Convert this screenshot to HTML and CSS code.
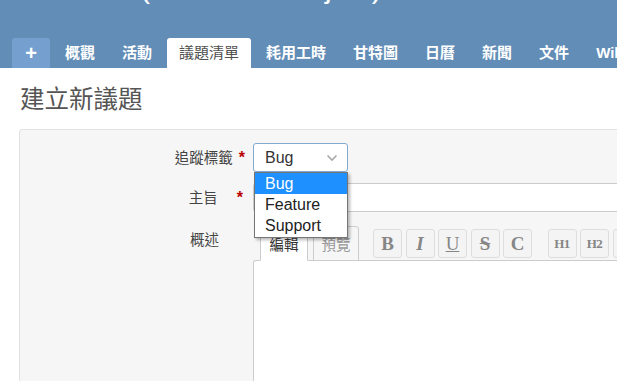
FILE: index.html
```html
<!DOCTYPE html>
<html lang="zh-Hant">
<head>
<meta charset="utf-8">
<title>建立新議題</title>
<link rel="stylesheet" href="styles.css">
</head>
<body>
<header class="header">
  <h1 class="site-title">(Redmine Project)</h1>
  <ul class="main-menu">
    <li><a class="tab-new">+</a></li>
    <li><a>概觀</a></li>
    <li><a>活動</a></li>
    <li><a class="selected">議題清單</a></li>
    <li><a>耗用工時</a></li>
    <li><a>甘特圖</a></li>
    <li><a>日曆</a></li>
    <li><a>新聞</a></li>
    <li><a>文件</a></li>
    <li><a>Wiki</a></li>
  </ul>
</header>
<main class="content">
  <h2 class="page-title">建立新議題</h2>
  <div class="box">
    <div class="row row-tracker">
      <label class="field-label">追蹤標籤<span class="required">*</span></label>
      <div class="select-wrap">
        <div class="select">
          <span>Bug</span>
          <svg class="chevron" width="12" height="8" viewBox="0 0 12 8"><polyline points="1.5,1.5 6,6 10.5,1.5" fill="none" stroke="#a8a8a8" stroke-width="1.6"/></svg>
        </div>
        <div class="dropdown">
          <div class="option active">Bug</div>
          <div class="option">Feature</div>
          <div class="option option-last">Support</div>
        </div>
      </div>
    </div>
    <div class="row row-subject">
      <label class="field-label">主旨<span class="required required-wide">*</span></label>
      <div class="text-input"></div>
    </div>
    <div class="row row-desc">
      <label class="field-label field-label-plain">概述</label>
      <div class="editor">
        <div class="editor-head">
          <div class="etab etab-selected">編輯</div>
          <div class="etab etab-preview">預覽</div>
          <div class="toolbar">
            <span class="tb tb-b">B</span>
            <span class="tb tb-i">I</span>
            <span class="tb tb-u">U</span>
            <span class="tb tb-s">S</span>
            <span class="tb tb-c">C</span>
            <span class="tb tb-h tb-group">H1</span>
            <span class="tb tb-h">H2</span>
            <span class="tb tb-h">H3</span>
          </div>
        </div>
        <div class="textarea"></div>
      </div>
    </div>
  </div>
</main>
</body>
</html>
```
FILE: styles.css
```css
* { box-sizing: border-box; }
html, body { margin: 0; padding: 0; }
body {
  width: 617px;
  height: 381px;
  overflow: hidden;
  background: #fff;
  color: #333;
  font-family: "Liberation Sans", "Noto Sans CJK TC", sans-serif;
}

.header {
  height: 68px;
  background: #628db6;
  display: flex;
  flex-direction: column;
  overflow: hidden;
}
.site-title {
  margin: -27px 0 0 140px;
  font-size: 30px;
  line-height: 30px;
  font-weight: normal;
  color: #fff;
  white-space: nowrap;
}
.main-menu {
  list-style: none;
  margin: auto 0 0 0;
  padding: 0 0 0 12px;
  display: flex;
  height: 30px;
  white-space: nowrap;
}
.main-menu li { flex: none; margin-right: 3px; }
.main-menu a {
  display: block;
  height: 30px;
  line-height: 30px;
  padding: 0 12px;
  color: #fff;
  font-weight: bold;
  font-size: 15px;
  border-radius: 3px 3px 0 0;
}
.main-menu .tab-new {
  width: 38px;
  padding: 0;
  text-align: center;
  background: #759fcf;
  font-size: 20px;
}
.main-menu .selected {
  background: #fff;
  color: #505050;
  font-weight: normal;
}

.content { padding-top: 18px; }
.page-title {
  margin: 0 0 15px 20px;
  font-size: 24.5px;
  line-height: 28px;
  font-weight: normal;
  color: #555;
}
.box {
  margin: 0 -30px 0 19px;
  height: 280px;
  border: 1px solid #e2e2e2;
  border-radius: 3px;
  background: #f6f6f6;
  padding-top: 13px;
}
.row { display: flex; align-items: center; }
.row-tracker { height: 29px; }
.row-subject { margin-top: 11px; }
.row-desc { margin-top: 14px; align-items: flex-start; }

.field-label {
  flex: none;
  width: 233px;
  text-align: right;
  padding-right: 8px;
  font-size: 14.5px;
  line-height: 20px;
  color: #444;
}
.field-label-plain { padding-right: 34px; padding-top: 4px; }
.required {
  color: #bb0000;
  font-weight: bold;
  font-size: 16px;
  margin-left: 6px;
}
.required-wide { margin-left: 19px; padding-right: 2px; }

.select-wrap { position: relative; flex: none; }
.select {
  width: 95px;
  height: 29px;
  border: 1px solid #82a9d0;
  border-radius: 3px;
  background: #fff;
  display: flex;
  align-items: center;
  padding-left: 11px;
  font-size: 16px;
  color: #333;
}
.chevron { margin-left: auto; margin-right: 9px; }
.dropdown {
  position: absolute;
  left: 1px;
  top: 29px;
  width: 94px;
  border: 1px solid #767676;
  background: #fff;
  box-shadow: 2px 2px 3px rgba(0, 0, 0, 0.28);
  z-index: 5;
}
.option {
  height: 21px;
  line-height: 21px;
  padding-left: 10px;
  font-size: 16px;
  color: #222;
}
.option-last { height: 22px; }
.option.active { background: #1e90ff; color: #fff; }

.text-input {
  flex: 1;
  height: 29px;
  border: 1px solid #ccc;
  border-radius: 3px;
  background: #fff;
}

.editor { flex: 1; }
.editor-head {
  display: flex;
  align-items: flex-end;
  padding-left: 7px;
  position: relative;
  z-index: 1;
  margin-bottom: -1px;
}
.etab {
  width: 48px;
  height: 35px;
  margin-right: 5px;
  border: 1px solid #ccc;
  border-radius: 3px 3px 0 0;
  background: #f6f6f6;
  color: #999;
  font-size: 14.5px;
  display: flex;
  align-items: center;
  justify-content: center;
}
.etab-preview { width: 46px; }
.etab-selected {
  background: #fff;
  border-bottom-color: #fff;
  color: #333;
}
.toolbar {
  display: flex;
  gap: 3.5px;
  margin: 0 0 3px 9px;
}
.tb {
  flex: none;
  width: 29px;
  height: 29px;
  border: 1px solid #ddd;
  border-radius: 3px;
  background: #f4f4f4;
  color: #868686;
  font-family: "Liberation Serif", serif;
  font-weight: bold;
  font-size: 19px;
  display: flex;
  align-items: center;
  justify-content: center;
}
.tb-i { font-style: italic; }
.tb-u { text-decoration: underline; font-weight: normal; }
.tb-s { text-decoration: line-through; }
.tb-h { font-size: 13px; letter-spacing: -0.5px; }
.tb-group { margin-left: 12px; }
.textarea {
  height: 200px;
  border: 1px solid #ccc;
  border-right: none;
  border-radius: 3px 0 0 0;
  background: #fff;
}
```
